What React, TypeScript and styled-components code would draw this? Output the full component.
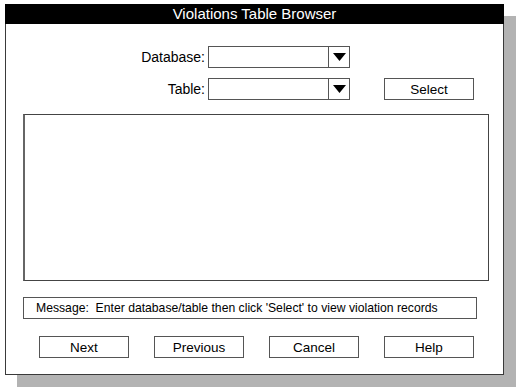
import React from "react";
import styled, { createGlobalStyle } from "styled-components";

const GlobalStyle = createGlobalStyle`
	html, body {
		margin: 0;
		padding: 0;
		background: #ffffff;
	}
	body {
		font-family: "Liberation Sans", Arial, Helvetica, sans-serif;
		font-size: 13px;
		color: #000;
	}
`;

const Page = styled.div`
	box-sizing: border-box;
	min-height: 100vh;
	padding: 4px 0 0 5px;
`;

// dialog and its drop shadow share one grid cell; padding leaves room for the shadow
const Frame = styled.div`
	display: grid;
	width: 499px;
	padding: 0 12px 12px 0;
`;

const Shadow = styled.div`
	grid-area: 1 / 1;
	margin: 12px -12px -12px 12px;
	background: #b3b3b3;
`;

const Window = styled.div`
	grid-area: 1 / 1;
	position: relative;
	z-index: 1;
	background: #fff;
	border: 1px solid #3a3a3a;
	border-top: none;
`;

const TitleBar = styled.div`
	height: 20px;
	margin: 0 -1px;
	background: #000;
	color: #fff;
	font-size: 15px;
	line-height: 20px;
	text-align: center;
`;

const Body = styled.div`
	padding: 22px 14px 16px 17px;
`;

const FormGrid = styled.div`
	display: grid;
	grid-template-columns: 199px 142px 90px;
	grid-auto-rows: 22px;
	column-gap: 3px;
	row-gap: 10px;
	margin-left: -17px;
	& > :nth-child(3n) {
		margin-left: 31px;
	}
`;

const Label = styled.label`
	display: flex;
	align-items: center;
	justify-content: flex-end;
	font-size: 14px;
`;

const Combo = styled.div`
	display: flex;
	border: 1px solid #555;
	background: #fff;
`;

const ComboField = styled.div`
	flex: 1;
`;

const ComboArrow = styled.div`
	width: 20px;
	border-left: 1px solid #555;
	display: flex;
	align-items: center;
	justify-content: center;
`;

const Button = styled.button`
	width: 90px;
	height: 22px;
	padding: 0;
	background: #fff;
	border: 1px solid #555;
	font-family: inherit;
	font-size: 13.5px;
	color: #000;
`;

const Spacer = styled.div``;

const ListBox = styled.div`
	margin-top: 14px;
	height: 165px;
	border: 1px solid #444;
	border-left: 2px solid #666;
	background: #fff;
`;

const MessageBox = styled.div`
	margin-top: 16px;
	width: 440px;
	height: 20px;
	padding-left: 12px;
	border: 1px solid #555;
	line-height: 20px;
	font-size: 12.2px;
	white-space: nowrap;
`;

const ButtonRow = styled.div`
	display: flex;
	gap: 25px;
	margin-top: 17px;
	padding-left: 16px;
`;

const Arrow = () => (
	<svg width="13" height="8" viewBox="0 0 13 8">
		<polygon points="0,0 13,0 6.5,8" fill="#000" />
	</svg>
);

const ComboBox = () => (
	<Combo>
		<ComboField />
		<ComboArrow>
			<Arrow />
		</ComboArrow>
	</Combo>
);

export default function App() {
	return (
		<Page>
			<GlobalStyle />
			<Frame>
				<Shadow />
				<Window>
					<TitleBar>Violations Table Browser</TitleBar>
					<Body>
						<FormGrid>
							<Label>Database:</Label>
							<ComboBox />
							<Spacer />
							<Label>Table:</Label>
							<ComboBox />
							<Button>Select</Button>
						</FormGrid>
						<ListBox />
						<MessageBox>
							Message:&nbsp; Enter database/table then click 'Select' to view violation records
						</MessageBox>
						<ButtonRow>
							<Button>Next</Button>
							<Button>Previous</Button>
							<Button>Cancel</Button>
							<Button>Help</Button>
						</ButtonRow>
					</Body>
				</Window>
			</Frame>
		</Page>
	);
}
